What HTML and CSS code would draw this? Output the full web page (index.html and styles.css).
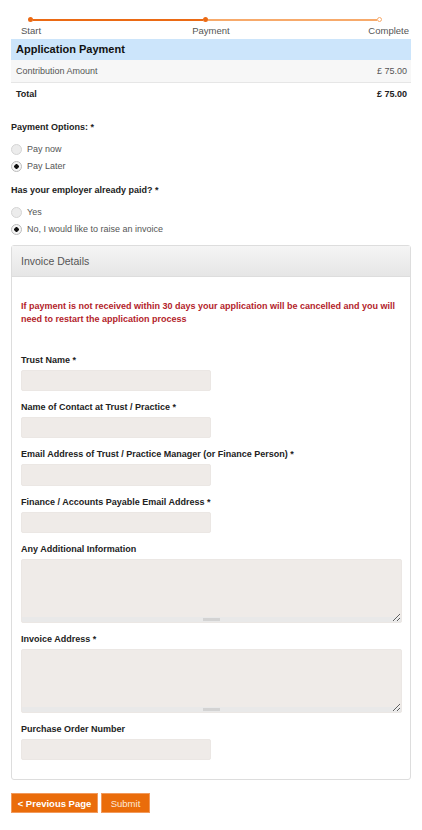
FILE: index.html
```html
<!DOCTYPE html>
<html lang="en">
<head>
  <meta charset="UTF-8" />
  <meta name="viewport" content="width=device-width, initial-scale=1.0" />
  <title>Application Payment</title>
  <link rel="stylesheet" href="styles.css">
</head>
<body>
  <div class="page">

    <!-- progress -->
    <div class="progress">
      <div class="track">
        <span class="dot done"></span>
        <span class="seg done"></span>
        <span class="dot done"></span>
        <span class="seg"></span>
        <span class="dot open"></span>
      </div>
      <div class="steps">
        <span class="step-start">Start</span>
        <span class="step-mid">Payment</span>
        <span class="step-end">Complete</span>
      </div>
    </div>

    <!-- summary -->
    <div class="summary">
      <div class="summary-head">Application Payment</div>
      <div class="summary-row shaded"><span>Contribution Amount</span><span>£ 75.00</span></div>
      <div class="summary-row total"><span>Total</span><span>£ 75.00</span></div>
    </div>

    <form>
      <div class="question">Payment Options: *</div>
      <label class="radio"><input type="radio" name="pay"> Pay now</label>
      <label class="radio"><input type="radio" name="pay" checked> Pay Later</label>

      <div class="question">Has your employer already paid? *</div>
      <label class="radio"><input type="radio" name="paid"> Yes</label>
      <label class="radio"><input type="radio" name="paid" checked> No, I would like to raise an invoice</label>

      <div class="panel">
        <div class="panel-head">Invoice Details</div>
        <div class="panel-body">
          <p class="warning">If payment is not received within 30 days your application will be cancelled and you will need to restart the application process</p>

          <div class="field">
            <label>Trust Name *</label>
            <input type="text">
          </div>
          <div class="field">
            <label>Name of Contact at Trust / Practice *</label>
            <input type="text">
          </div>
          <div class="field">
            <label>Email Address of Trust / Practice Manager (or Finance Person) *</label>
            <input type="text" class="tall">
          </div>
          <div class="field">
            <label>Finance / Accounts Payable Email Address *</label>
            <input type="text">
          </div>
          <div class="field">
            <label>Any Additional Information</label>
            <textarea></textarea>
          </div>
          <div class="field">
            <label>Invoice Address *</label>
            <textarea></textarea>
          </div>
          <div class="field last">
            <label>Purchase Order Number</label>
            <input type="text">
          </div>
        </div>
      </div>

      <div class="actions">
        <button type="button" class="btn prev">&lt; Previous Page</button>
        <button type="button" class="btn submit">Submit</button>
      </div>
    </form>
  </div>
</body>
</html>
```

FILE: styles.css
```css
body { margin: 0; background: #fff; font-family: "Liberation Sans", Arial, sans-serif; font-size: 9px; color: #333; }
.page { padding: 0 11px; }

/* progress */
.progress { padding-top: 17px; margin-bottom: 2px; }
.track { display: flex; align-items: center; height: 5px; margin: 0 29px 0 17px; }
.seg { flex: 1; height: 2px; background: #f7aa6b; }
.seg.done { background: #eb6a14; }
.dot { width: 5px; height: 5px; border-radius: 50%; background: #eb6a14; box-sizing: border-box; }
.dot.open { background: #fff; border: 1px solid #f7aa6b; }
.steps { display: grid; grid-template-columns: 1fr auto 1fr; line-height: 12px; margin-top: 3px; font-size: 9.5px; color: #555; }
.step-start { padding-left: 10px; }
.step-end { justify-self: end; padding-right: 2px; }

/* summary */
.summary-head { background: #cce5fb; height: 21px; line-height: 21px; padding-left: 5px; font-size: 11px; font-weight: bold; color: #111; }
.summary-row { display: flex; justify-content: space-between; padding: 0 4px 0 5px; }
.summary-row.shaded { height: 22px; line-height: 22px; background: #f7f7f7; color: #555; border-bottom: 1px solid #e6e6e6; }
.summary-row.total { height: 22px; line-height: 22px; font-weight: bold; color: #222; }

/* radios */
.question { font-weight: bold; line-height: 12px; margin: 16px 0 10px; color: #222; }
.radio { display: flex; align-items: center; height: 12px; margin-bottom: 5px; color: #555; }
.radio + .question { margin-top: 12px; }
.radio input { appearance: none; width: 11px; height: 11px; margin: 0 5px 0 0; border: 1px solid #d5d5d5; border-radius: 50%; background: #ececec; box-sizing: border-box; }
.radio input:checked { background: radial-gradient(circle, #111 0 2px, #f4f4f4 2.5px); border-color: #bbb; }

/* invoice panel */
.panel { margin-top: 10px; border: 1px solid #ddd; border-radius: 3px; }
.panel-head { height: 30px; line-height: 30px; padding-left: 9px; font-size: 10.5px; color: #555; background: linear-gradient(#f5f5f5, #e6e6e6); border-bottom: 1px solid #ddd; }
.panel-body { padding: 23px 8px 19px 9px; }
.warning { margin: 0 0 28px; font-weight: bold; line-height: 13px; color: #b3232b; }
.field { margin-bottom: 10px; }
.field.last { margin-bottom: 0; }
.field label { display: block; font-weight: bold; line-height: 12px; margin-bottom: 4px; color: #222; }
.field input { display: block; width: 190px; height: 21px; box-sizing: border-box; border: 1px solid #ebe7e4; border-radius: 2px; background: #efebe8; }
.field input.tall { height: 22px; }
.field textarea { display: block; width: 381px; height: 64px; box-sizing: border-box; border: 1px solid #ebe7e4; border-radius: 2px; font: inherit;
  background:
    linear-gradient(#d3d3d3, #d3d3d3) center bottom 1px / 17px 3px no-repeat,
    linear-gradient(#e9e9e9, #e9e9e9) left bottom / 100% 5px no-repeat,
    #efebe8; }

/* buttons */
.actions { display: flex; gap: 3px; margin: 13px 0 16px; }
.btn { height: 20px; padding: 0; border: 1px solid #f29a5c; background: #ea6c0a; color: #fff; font-family: inherit; font-size: 9.5px; cursor: pointer; }
.btn.prev { width: 87px; font-weight: bold; }
.btn.submit { width: 49px; color: #fde8d8; }
```
